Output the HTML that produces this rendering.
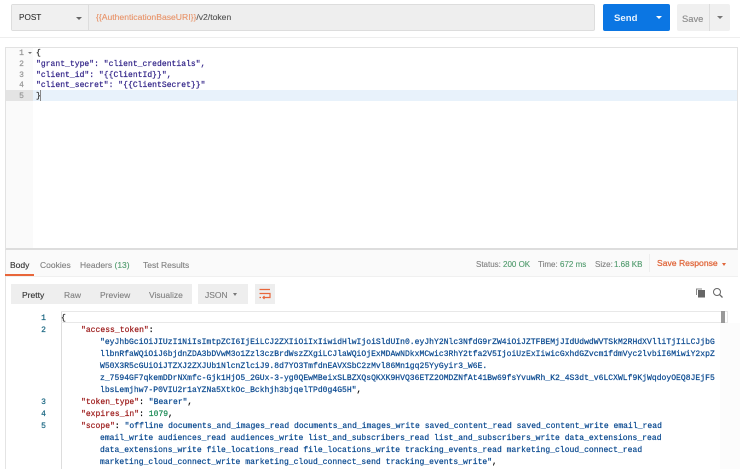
<!DOCTYPE html>
<html><head><meta charset="utf-8"><style>
html,body{margin:0;padding:0;background:#fff}
#p{position:relative;width:740px;height:469px;overflow:hidden;background:#fff;font-family:"Liberation Sans",sans-serif;filter:blur(.35px);-webkit-text-stroke:.12px}
#p div,#p span.a{position:absolute;white-space:pre}
.m{font-family:"Liberation Mono",monospace;font-size:8px;letter-spacing:.04px;line-height:12px;height:12px;-webkit-text-stroke:.22px}
.s{font-size:8.5px;color:#808080;line-height:12px}
.k{color:#9c1a1a}.b{color:#0d4f8f}.tk{color:#35278a}
.g{color:#4f9a6c}
.ln{color:#1f6a85;width:14px;text-align:right;left:32px}
.ln2{color:#999;width:17px;text-align:right;left:7px;line-height:11px;height:11px}
.v{color:#0b4a90}
</style></head><body><div id="p">
<div style="left:0;top:0;width:740px;height:37px;background:#fff;border-bottom:1px solid #eee"></div>
<div style="left:11px;top:4px;width:584px;height:27px;background:#eee;border:1px solid #ddd;border-radius:2px;box-sizing:border-box"></div>
<div style="left:12px;top:5px;width:76px;height:25px;background:#f0f0f0;border-right:1px solid #ddd"></div>
<div style="left:19px;top:12px;font-size:8.2px;line-height:12px;color:#333">POST</div>
<div style="left:76px;top:17px;width:0;height:0;border:3px solid transparent;border-top:3px solid #666;border-bottom:0"></div>
<div style="left:96px;top:11px;font-size:8.6px;line-height:12px;color:#e8946a">{{AuthenticationBaseURI}}<span style="color:#555">/v2/token</span></div>
<div style="left:603px;top:4px;width:67px;height:27px;background:#0b76e3;border-radius:2px"></div>
<div style="left:614px;top:12px;font-size:9.6px;font-weight:bold;line-height:13px;color:#e9f3fd;-webkit-text-stroke:0">Send</div>
<div style="left:656px;top:16px;width:0;height:0;border:3px solid transparent;border-top:3px solid #fff;border-bottom:0"></div>
<div style="left:677px;top:4px;width:53px;height:27px;background:#f0f0f0;border-radius:2px"></div>
<div style="left:709px;top:4px;width:1px;height:27px;background:#ddd"></div>
<div style="left:682px;top:12px;font-size:9.4px;line-height:13px;color:#888">Save</div>
<div style="left:717px;top:16px;width:0;height:0;border:3px solid transparent;border-top:3px solid #777;border-bottom:0"></div>

<div style="left:5px;top:47px;width:733px;height:203px;box-sizing:border-box;border:1px solid #e2e2e2;border-bottom:2px solid #ddd;background:#fff"></div>
<div style="left:6px;top:48px;width:27px;height:200px;background:#fafafa"></div>
<div style="left:6px;top:90px;width:27px;height:11px;background:#e4e4e4"></div>
<div style="left:33px;top:90px;width:704px;height:11px;background:#e8f2fb"></div>
<div class="m ln2" style="top:48px">1</div><div style="left:28px;top:52px;width:0;height:0;border:2px solid transparent;border-top:2px solid #777;border-bottom:0"></div>
<div class="m ln2" style="top:59px">2</div><div class="m ln2" style="top:70px">3</div><div class="m ln2" style="top:80px">4</div><div class="m ln2" style="top:91px">5</div>
<div class="m" style="left:36px;top:48px;height:11px;line-height:11px;color:#333">{</div>
<div class="m tk" style="left:36px;top:59px;height:11px;line-height:11px">"grant_type": "client_credentials",</div>
<div class="m tk" style="left:36px;top:70px;height:11px;line-height:11px">"client_id": "{{ClientId}}",</div>
<div class="m tk" style="left:36px;top:80px;height:11px;line-height:11px">"client_secret": "{{ClientSecret}}"</div>
<div class="m" style="left:36px;top:91px;height:11px;line-height:11px;color:#333">}</div>
<div style="left:40px;top:90px;width:1px;height:11px;background:#888"></div>

<div style="left:5px;top:250px;width:733px;height:26px;background:#fafafa"></div>
<div style="left:5px;top:276px;width:733px;height:1px;background:#f0f0f0"></div>
<div style="left:5px;top:250px;width:1px;height:219px;background:#e4e4e4"></div>
<div style="left:10px;top:259px;font-size:8.5px;line-height:12px;color:#333">Body</div>
<div class="s" style="left:40px;top:259px">Cookies</div>
<div class="s" style="left:80px;top:259px">Headers <span style="color:#4f9a6c">(13)</span></div>
<div class="s" style="left:143px;top:259px">Test Results</div>
<div style="left:5px;top:274px;width:29px;height:2px;background:#e8663a"></div>
<div class="s" style="left:476px;top:259px;font-size:8px">Status:</div><div class="s g" style="left:503px;top:259px;font-size:8px;color:#4f9a6c">200 OK</div>
<div class="s" style="left:538px;top:259px;font-size:8px">Time:</div><div class="s" style="left:560px;top:259px;font-size:8px;color:#4f9a6c">672 ms</div>
<div class="s" style="left:595px;top:259px;font-size:8px">Size:</div><div class="s" style="left:614px;top:259px;font-size:8px;color:#4f9a6c">1.68 KB</div>
<div style="left:649px;top:254px;width:1px;height:18px;background:#eee"></div>
<div style="left:657px;top:257px;font-size:8.6px;line-height:12px;color:#e0663a;-webkit-text-stroke:.25px">Save Response</div>
<div style="left:722px;top:263px;width:0;height:0;border:2.5px solid transparent;border-top:3px solid #e0663a;border-bottom:0"></div>

<div style="left:11px;top:284px;width:181px;height:20px;background:#eee"></div>
<div style="left:22px;top:289px;font-size:8.5px;line-height:12px;color:#333">Pretty</div>
<div class="s" style="left:64px;top:289px">Raw</div>
<div class="s" style="left:100px;top:289px">Preview</div>
<div class="s" style="left:149px;top:289px">Visualize</div>
<div style="left:198px;top:284px;width:50px;height:20px;background:#eee"></div>
<div class="s" style="left:205px;top:289px">JSON</div>
<div style="left:233px;top:293px;width:0;height:0;border:2.5px solid transparent;border-top:3px solid #777;border-bottom:0"></div>
<div style="left:255px;top:284px;width:20px;height:20px;background:#eee"></div>
<svg style="position:absolute;left:259px;top:287px" width="12" height="14" viewBox="0 0 12 14" fill="none" stroke="#e8663a" stroke-width="1.2"><path d="M0.5 2.5H11M0.5 6.5H11V10.5H4M5.5 9L4 10.5L5.5 12M0.5 10.5H2"/></svg>
<svg style="position:absolute;left:695px;top:287px" width="11" height="11" viewBox="0 0 11 11"><path d="M1 1.5H7V2.5H2V8H1Z" fill="#888"/><rect x="3" y="3" width="7" height="7.5" fill="#666"/></svg>
<svg style="position:absolute;left:712px;top:287px" width="12" height="12" viewBox="0 0 12 12" fill="none" stroke="#666" stroke-width="1"><circle cx="5" cy="5" r="3.5"/><path d="M7.6 7.6L10.5 10.5" stroke-width="1.3"/></svg>

<div style="left:61px;top:311px;width:1px;height:158px;background:#ddd"></div>
<div style="left:61px;top:311px;width:667px;height:12px;box-sizing:border-box;border:1px solid #e8e8e8;border-left:0"></div>
<div style="left:721px;top:311px;width:4px;height:12px;background:#999"></div>
<div style="left:720px;top:323px;width:20px;height:146px;background:#fcfcfc"></div>

<div class="m ln" style="top:313px">1</div><div class="m ln" style="top:325px">2</div><div class="m ln" style="top:397px">3</div><div class="m ln" style="top:409px">4</div><div class="m ln" style="top:421px">5</div>
<div class="m" style="left:61px;top:313px;color:#333">{</div>
<div class="m" style="left:81px;top:325px"><span class="k">"access_token"</span>:</div>
<div class="m v" style="left:100px;top:337px">"eyJhbGciOiJIUzI1NiIsImtpZCI6IjEiLCJ2ZXIiOiIxIiwidHlwIjoiSldUIn0.eyJhY2Nlc3NfdG9rZW4iOiJZTFBEMjJIdUdwdWVTSkM2RHdXVlliTjIiLCJjbG</div>
<div class="m v" style="left:100px;top:349px">llbnRfaWQiOiJ6bjdnZDA3bDVwM3o1Zzl3czBrdWszZXgiLCJlaWQiOjExMDAwNDkxMCwic3RhY2tfa2V5IjoiUzExIiwicGxhdGZvcm1fdmVyc2lvbiI6MiwiY2xpZ</div>
<div class="m v" style="left:100px;top:361px">W50X3R5cGUiOiJTZXJ2ZXJUb1NlcnZlciJ9.8d7YO3TmfdnEAVXSbC2zMvl86Mn1gq25YyGyir3_W6E.</div>
<div class="m v" style="left:100px;top:373px">z_7594GF7qkemDDrNXmfc-Gjk1HjO5_2GUx-3-yg0QEwMBeixSLBZXQsQKXK9HVQ36ETZ2OMDZNfAt41Bw69fsYvuwRh_K2_4S3dt_v6LCXWLf9KjWqdoyOEQ8JEjF5</div>
<div class="m" style="left:100px;top:385px"><span class="v">lbsLemjhw7-P0VIU2r1aYZNa5XtkOc_Bckhjh3bjqelTPd0g4G5H"</span>,</div>
<div class="m" style="left:81px;top:397px"><span class="k">"token_type"</span>: <span class="v">"Bearer"</span>,</div>
<div class="m" style="left:81px;top:409px"><span class="k">"expires_in"</span>: <span style="color:#1a8a55">1079</span>,</div>
<div class="m" style="left:81px;top:421px"><span class="k">"scope"</span>: <span class="v">"offline documents_and_images_read documents_and_images_write saved_content_read saved_content_write email_read</span></div>
<div class="m v" style="left:100px;top:433px">email_write audiences_read audiences_write list_and_subscribers_read list_and_subscribers_write data_extensions_read</div>
<div class="m v" style="left:100px;top:445px">data_extensions_write file_locations_read file_locations_write tracking_events_read marketing_cloud_connect_read</div>
<div class="m" style="left:100px;top:457px"><span class="v">marketing_cloud_connect_write marketing_cloud_connect_send tracking_events_write"</span>,</div>
</div></body></html>
